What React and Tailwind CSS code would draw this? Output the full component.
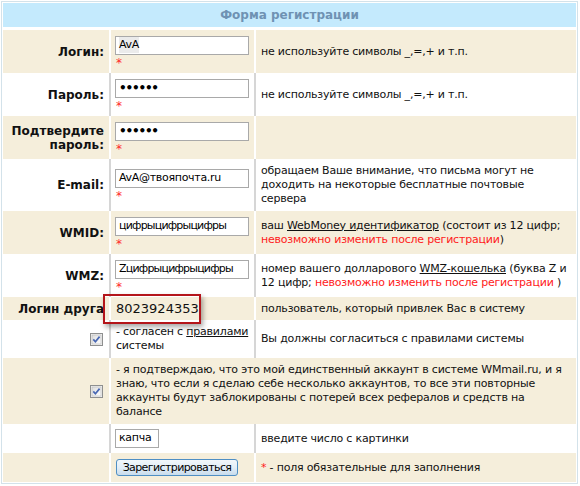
import React from 'react';

const font = { fontFamily: '"DejaVu Sans", Verdana, sans-serif' };

const Star = () => <div className="text-[#ff2a2a] text-[12px] leading-[10px] mt-[3px] pl-[1px]">*</div>;

const Field = ({ value, w = 'w-[134px]', t = 'tracking-[-0.3px]' }) => (
    <div className={`${w} h-[19px] border border-[#a9a9a9] bg-white flex items-center px-[3px] text-[11px] ${t} text-black overflow-hidden whitespace-nowrap`}>
        {value}
    </div>
);

const Dots = () => <span className="text-[12px] font-bold leading-none tracking-[-1.2px]">••••••</span>;

const Check = () => (
    <svg width="13" height="13" viewBox="0 0 13 13">
        <defs>
            <linearGradient id="cb" x1="0" y1="0" x2="1" y2="1">
                <stop offset="0" stopColor="#dcdcdc" />
                <stop offset="1" stopColor="#ffffff" />
            </linearGradient>
        </defs>
        <rect x="0.5" y="0.5" width="12" height="12" fill="#f2f2f2" stroke="#8e8f8f" />
        <rect x="2" y="2" width="9" height="9" fill="url(#cb)" stroke="#b7b7b7" strokeWidth="0.6" />
        <path d="M3.3 6.4 L5.4 8.8 L9.6 3.6" fill="none" stroke="#4867b3" strokeWidth="1.7" />
    </svg>
);

// one table row: label | input | description
const Row = ({ beige, h, label, mid, desc, span }) => {
    const bg = beige ? 'bg-[#f5eedb]' : 'bg-white';
    const line = beige ? 'border-white' : 'border-[#d6d6d6]';
    return (
        <div className={`flex ${h}`}>
            <div className={`w-[108px] shrink-0 ${bg} border-r-2 ${line} flex items-center justify-end pr-[5px] text-right font-bold text-[12px] leading-[14px]`}>
                {label}
            </div>
            {span ? (
                <div className={`flex-1 ${bg} flex items-center pl-[5px] pr-[1px] text-[11px] tracking-[-0.2px] leading-[14px] whitespace-nowrap`}>{span}</div>
            ) : (
                <>
                    <div className={`w-[145px] shrink-0 ${bg} border-r-2 ${line} flex items-center pl-[4px] relative`}>
                        {mid}
                    </div>
                    <div className={`flex-1 ${bg} flex items-center pl-[5px] pr-[1px] text-[11px] tracking-[-0.2px] leading-[14px] whitespace-nowrap`}>{desc}</div>
                </>
            )}
        </div>
    );
};

const Red = ({ children }) => <span className="text-[#ff1a1a]">{children}</span>;

export default function App() {
    const rule = 'не используйте символы _,=,+ и т.п.';
    return (
        <div className="w-[580px] h-[486px] bg-white pt-[1px] pl-[1px]" style={font}>
            <div className="w-[577px] border border-[#d3e2ea] bg-white p-[1px] text-[#111]">
                {/* Header */}
                <div className="h-[24px] bg-[#c4eafd] flex items-center justify-center font-bold text-[12px] text-[#6f92b3]">
                    Форма регистрации
                </div>
                <div className="h-[3px]" />

                <Row beige h="h-[43px]" label="Логин:"
                    mid={<div><Field value={<span className="bg-[#ebebeb]">AvA</span>} /><Star /></div>}
                    desc={rule} />
                <Row h="h-[43px]" label="Пароль:"
                    mid={<div><Field value={<Dots />} /><Star /></div>}
                    desc={rule} />
                <Row beige h="h-[43px]" label={<span>Подтвердите<br />пароль:</span>}
                    mid={<div><Field value={<Dots />} /><Star /></div>}
                    desc="" />
                <Row h="h-[52px]" label="E-mail:"
                    mid={<div><Field value="AvA@твояпочта.ru" /><Star /></div>}
                    desc={<span>обращаем Ваше внимание, что письма могут не<br />доходить на некоторые бесплатные почтовые<br />сервера</span>} />
                <Row beige h="h-[43px]" label="WMID:"
                    mid={<div><Field value="цифрыцифрыцифры" t="tracking-[-0.8px]" /><Star /></div>}
                    desc={<span>ваш <u>WebMoney идентификатор</u> (состоит из 12 цифр;<br /><Red>невозможно изменить после регистрации</Red>)</span>} />
                <Row h="h-[43px]" label="WMZ:"
                    mid={<div><Field value="Zцифрыцифрыцифры" t="tracking-[-0.8px]" /><Star /></div>}
                    desc={<span>номер вашего долларового <u>WMZ-кошелька</u> (буква Z и<br />12 цифр; <Red>невозможно изменить после регистрации </Red>)</span>} />
                <Row beige h="h-[23px]" label="Логин друга"
                    mid={
                        <>
                            <span className="text-[13px] pl-[1px]">8023924353</span>
                            {/* annotation frame */}
                            <div className="absolute left-[-8px] top-[-3px] w-[98px] h-[30px] border-2 border-[#b4151b] shadow-[2px_3px_5px_rgba(0,0,0,0.35)] z-10" />
                        </>
                    }
                    desc="пользователь, который привлек Вас в систему" />
                <Row h="h-[38px]" label={<div className="pr-[1px] pt-[1px]"><Check /></div>}
                    mid={<div className="text-[11px] tracking-[-0.2px] leading-[14px] font-normal pl-[1px]">- согласен с <u>правилами</u><br />системы</div>}
                    desc="Вы должны согласиться с правилами системы" />
                <Row beige h="h-[66px]" label={<div className="pr-[1px]"><Check /></div>}
                    span={<div>- я подтверждаю, что это мой единственный аккаунт в системе WMmail.ru, и я<br />знаю, что если я сделаю себе несколько аккаунтов, то все эти повторные<br />аккаунты будут заблокированы с потерей всех рефералов и средств на<br />балансе</div>} />
                <Row h="h-[29px]" label=""
                    mid={<Field value="капча" w="w-[44px]" />}
                    desc="введите число с картинки" />
                <Row beige h="h-[29px]" label=""
                    mid={
                        <button className="ml-[1px] w-[122px] h-[17px] rounded-[3px] border border-[#4f8fc4] bg-gradient-to-b from-[#f2f7fb] via-[#e3eef7] to-[#c9dcec] text-[11px] tracking-[-0.6px] leading-none text-black">
                            Зарегистрироваться
                        </button>
                    }
                    desc={<span><Red>*</Red> - поля обязательные для заполнения</span>} />
            </div>
        </div>
    );
}
